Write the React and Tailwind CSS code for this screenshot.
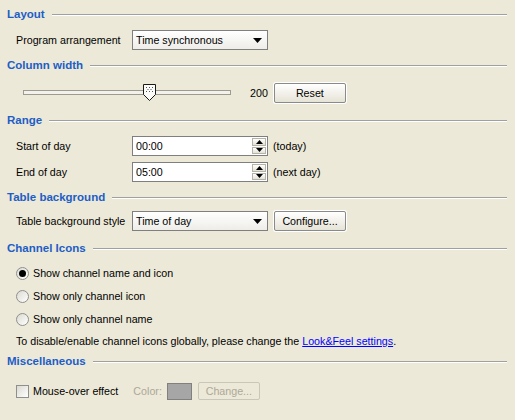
import React from "react";

const font = { fontFamily: '"Liberation Sans", Arial, sans-serif' };

function Header({ title, className = "" }) {
  return (
    <div className={`flex h-[20px] items-center ${className}`}>
      <span className="text-[11.5px] font-bold text-[#215dc6]">{title}</span>
      <div className="ml-[7px] flex-1 border-t border-b border-t-[#a0a0a0] border-b-white" />
    </div>
  );
}

function Arrow({ up = false }) {
  return (
    <svg width="7" height="4" viewBox="0 0 7 4">
      {up ? <path d="M0 4 L3.5 0 L7 4 Z" fill="#000" /> : <path d="M0 0 L7 0 L3.5 4 Z" fill="#000" />}
    </svg>
  );
}

function Combo({ value }) {
  return (
    <div className="flex h-[20px] w-[136px] items-center border border-[#7f7f7f] bg-gradient-to-b from-white to-[#eeede8] pl-[3px] pr-[5px]">
      <span className="flex-1 text-[10.7px] text-black">{value}</span>
      <svg width="9" height="5" viewBox="0 0 9 5">
        <path d="M0 0 L9 0 L4.5 5 Z" fill="#000" />
      </svg>
    </div>
  );
}

function Button({ label, className = "", disabled = false }) {
  return (
    <div
      className={`flex items-center justify-center rounded-[2px] border text-[10.7px] ${
        disabled
          ? "border-[#c9c7ba] bg-[#ece9d8] text-[#aca899]"
          : "border-[#8a8a8a] bg-gradient-to-b from-white to-[#e6e3d6] text-black shadow-[0_0_0_1px_#ffffff]"
      } ${className}`}
    >
      {label}
    </div>
  );
}

function Spinner({ value }) {
  return (
    <div className="flex h-[20px] w-[136px] border border-[#7f7f7f] bg-white">
      <div className="flex flex-1 items-center pl-[3px] text-[10.7px]">{value}</div>
      <div className="flex w-[15px] flex-col gap-[1px] py-[1px] pr-[1px]">
        <div className="flex flex-1 items-center justify-center border border-[#b5b3a8] bg-gradient-to-b from-white to-[#e4e1d5]">
          <Arrow up />
        </div>
        <div className="flex flex-1 items-center justify-center border border-[#b5b3a8] bg-gradient-to-b from-white to-[#e4e1d5]">
          <Arrow />
        </div>
      </div>
    </div>
  );
}

function Radio({ checked, label }) {
  return (
    <div className="flex h-[23px] items-center">
      <div className="flex h-[13px] w-[13px] items-center justify-center rounded-full border border-[#8e8f8f] bg-gradient-to-br from-[#dcdad0] to-white">
        {checked && <div className="h-[7px] w-[7px] rounded-full bg-black" />}
      </div>
      <span className="ml-[4px] text-[10.7px] text-black">{label}</span>
    </div>
  );
}

export default function App() {
  return (
    <div style={font} className="h-[420px] w-[515px] overflow-hidden bg-[#ece9d8] pl-[7px] pr-[8px] pt-[5px] text-black">
      <Header title="Layout" />
      <div className="mt-[5px] flex items-center pl-[9px]">
        <span className="w-[116px] text-[10.7px]">Program arrangement</span>
        <Combo value="Time synchronous" />
      </div>

      <Header title="Column width" className="mt-[6px]" />
      <div className="mt-[7px] flex h-[20px] items-center pl-[9px]">
        <div className="relative h-[20px] w-[222px]">
          <div className="absolute left-[7px] right-[7px] top-[7px] h-[5px] border border-[#9d9b8f] bg-[#f2f1eb]" />
          <svg width="13" height="17" viewBox="0 0 13 17" className="absolute left-[127px] top-[1px]">
            <path d="M0.5 0.5 H12.5 V10.5 L6.5 16.5 L0.5 10.5 Z" fill="#fbfbf9" stroke="#1a1a1a" />
            <g fill="#555">
              <rect x="3" y="3" width="1" height="1" />
              <rect x="6" y="3" width="1" height="1" />
              <rect x="9" y="3" width="1" height="1" />
              <rect x="4.5" y="5" width="1" height="1" />
              <rect x="7.5" y="5" width="1" height="1" />
              <rect x="3" y="7" width="1" height="1" />
              <rect x="6" y="7" width="1" height="1" />
              <rect x="9" y="7" width="1" height="1" />
            </g>
          </svg>
        </div>
        <span className="ml-[12px] text-[10.7px]">200</span>
        <Button label="Reset" className="ml-[6px] h-[20px] w-[72px]" />
      </div>

      <Header title="Range" className="mt-[8px]" />
      <div className="mt-[5px] flex items-center pl-[9px]">
        <span className="w-[116px] text-[10.7px]">Start of day</span>
        <Spinner value="00:00" />
        <span className="ml-[5px] text-[10.7px]">(today)</span>
      </div>
      <div className="mt-[6px] flex items-center pl-[9px]">
        <span className="w-[116px] text-[10.7px]">End of day</span>
        <Spinner value="05:00" />
        <span className="ml-[5px] text-[10.7px]">(next day)</span>
      </div>

      <Header title="Table background" className="mt-[6px]" />
      <div className="mt-[3px] flex items-center pl-[9px]">
        <span className="w-[116px] text-[10.7px]">Table background style</span>
        <Combo value="Time of day" />
        <Button label="Configure..." className="ml-[6px] h-[20px] w-[72px]" />
      </div>

      <Header title="Channel Icons" className="mt-[8px]" />
      <div className="mt-[3px] pl-[9px]">
        <Radio checked label="Show channel name and icon" />
        <Radio label="Show only channel icon" />
        <Radio label="Show only channel name" />
        <div className="flex h-[20px] items-center text-[10.7px]">
          <span>
            To disable/enable channel icons globally, please change the{" "}
            <span className="text-[#0000ff] underline">Look&amp;Feel settings</span>.
          </span>
        </div>
      </div>

      <Header title="Miscellaneous" className="mt-[1px]" />
      <div className="mt-[9px] flex h-[20px] items-center pl-[9px]">
        <div className="h-[13px] w-[13px] border border-[#8e8f8f] bg-gradient-to-br from-[#dcdad0] to-white" />
        <span className="ml-[4px] text-[10.7px]">Mouse-over effect</span>
        <span className="ml-[15px] text-[10.7px] text-[#aca899]">Color:</span>
        <div className="ml-[5px] h-[17px] w-[25px] border border-[#808080] bg-[#a6a6a6]" />
        <Button label="Change..." disabled className="ml-[6px] h-[18px] w-[62px]" />
      </div>
    </div>
  );
}
